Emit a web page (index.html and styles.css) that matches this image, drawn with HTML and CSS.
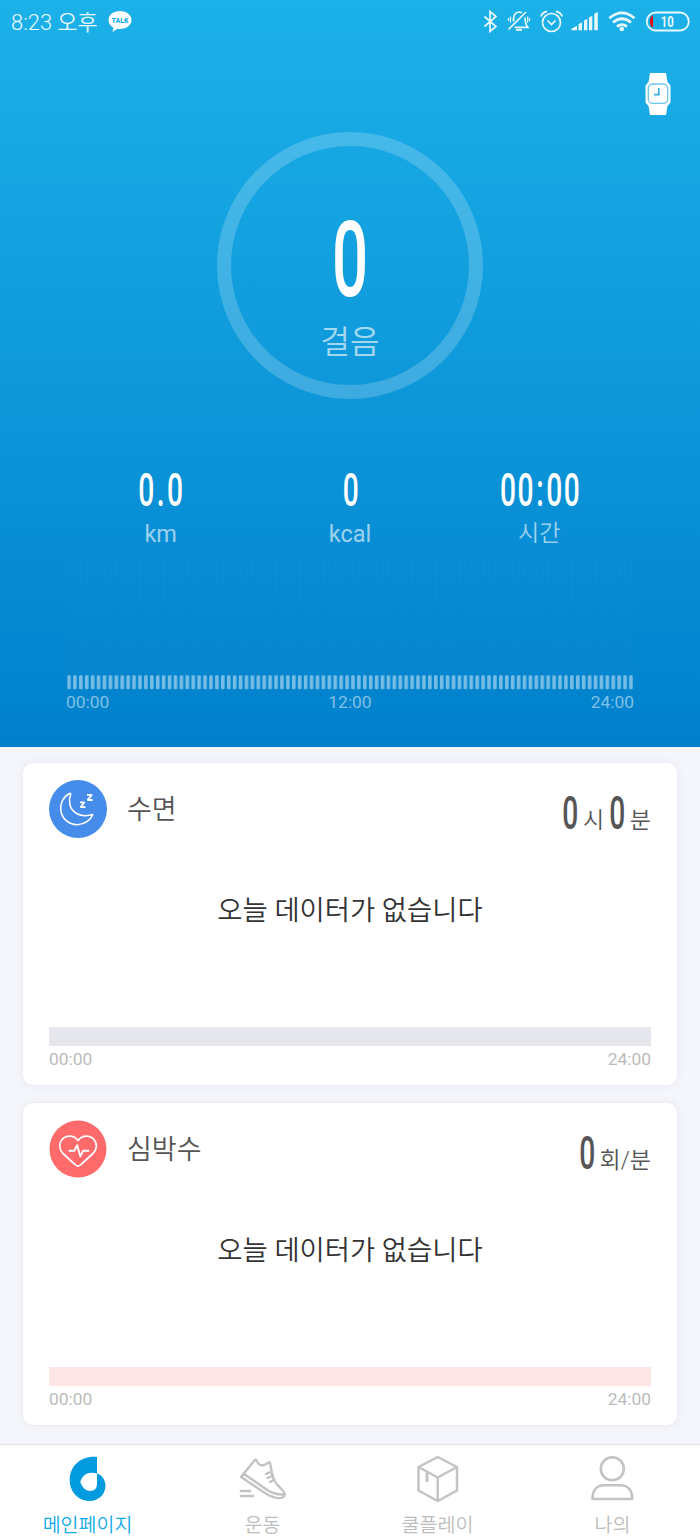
FILE: index.html
```html
<!DOCTYPE html>
<html lang="ko">
<head>
<meta charset="utf-8">
<title>메인페이지</title>
<link rel="stylesheet" href="styles.css">
</head>
<body>
<main class="app">
  <section class="hero">
    <header class="status">
      <div class="status-left">
        <span>8:23 오후</span>
        <svg width="24" height="24" viewBox="0 0 24 24"><path d="M12 1C5.400 1 .5 4.900 .5 10c0 3.400 2 6.200 5 7.700L4.500 22l5-3.300c.8.100 1.600.2 2.500.2 6.600 0 11.500-3.900 11.500-8.900S18.600 1 12 1z" fill="#fff"/><text class="talk" x="12" y="12.500" text-anchor="middle" textLength="17" lengthAdjust="spacingAndGlyphs">TALK</text></svg>
      </div>
      <svg class="status-right" width="210" height="26" viewBox="480 9 210 26" fill="none" stroke="#e9f8ff" stroke-width="1.700">
        <path d="M484.500 16.500 L496 26.500 L490 31.500 V11.500 L496 16.500 L484.500 26.500"/>
        <path d="M508.500 29.500 L526 12"/>
        <path d="M513.500 21.500 V18.500 C514 14 516.500 12 519.500 12 L522 12.700 M525 17.500 C525.200 22 525.500 24.500 527.800 27.300 H514.500"/>
        <path d="M516 29.800 H522" stroke-width="2"/>
        <path d="M510.500 16.500 V22.500 M508.500 18 V21 M527.700 16.500 V22.500 M529.500 18 V21" stroke-width="1.200"/>
        <circle cx="551.500" cy="22.500" r="9"/>
        <path d="M547.500 20.500 L551.500 24.500 L555.500 20.500 M540.800 16.500 Q542 12.500 547 11.300 M562.200 16.500 Q561 12.500 556 11.300"/>
        <g fill="#e9f8ff" stroke="none"><path d="M571.500 30.200 v-1.500 l5.500-3 v4.500z"/><path d="M578.500 30.200 v-6 l3.500-2 v8z"/><path d="M584 30.200 V20.500 l3.300-1.700 V30.200z"/><path d="M589 30.200 V17.500 l3.300-1.700 V30.200z"/><path d="M594.300 30.200 V13.800 l3.500-1.800 V30.200z"/></g>
        <g stroke-width="2.700"><path d="M609.300 18.200 Q622 7.500 634.500 18.200"/><path d="M613 22.500 Q622 15 631 22.500"/><path d="M617 26.600 Q622 22.500 627 26.600"/></g>
        <circle cx="621.800" cy="29" r="2.300" fill="#e9f8ff" stroke="none"/>
        <rect x="646.800" y="12.500" width="42" height="18" rx="9" stroke-width="1.800"/>
        <path d="M653 15.500 V27.500 C649 27 648.800 16 653 15.500z" fill="#e50914" stroke="none"/>
        <text class="battery" x="667.300" y="26.500" text-anchor="middle" textLength="13" lengthAdjust="spacingAndGlyphs">10</text>
      </svg>
    </header>
    <div class="toolbar">
      <svg width="26" height="42" viewBox="0 0 26 42"><path d="M5 0h16l1.500 9 3 3.500v17L22.500 33 21 42H5l-1.500-9-3-3.500v-17L3.500 9z" fill="#fff"/><rect x="3.300" y="11" width="19.400" height="19.400" rx="4.500" fill="none" stroke="#6cc5eb" stroke-width="1.300"/><path d="M13.800 15v6.700H9" fill="none" stroke="#39aee2" stroke-width="1.700"/></svg>
    </div>
    <div class="ring">
      <div class="steps"><span class="narrow">0</span></div>
      <div class="steps-label">걸음</div>
    </div>
    <div class="stats">
      <div class="stat"><b class="num"><span class="narrow">0<i class="dot">.</i>0</span></b><span>km</span></div>
      <div class="stat"><b class="num"><span class="narrow">0</span></b><span>kcal</span></div>
      <div class="stat"><b class="num"><span class="narrow">00<i class="colon">:</i>00</span></b><span class="ko">시간</span></div>
    </div>
    <svg class="ticks" width="568" height="130" viewBox="0 0 568 130">
      <defs>
        <pattern id="tick" x="1.200" width="5.916" height="15" patternUnits="userSpaceOnUse" y="115"><rect x="0" y="0.300" width="3.600" height="14" rx="1.300" fill="#fff" fill-opacity=".46"/></pattern>
        <pattern id="stripe" x="1.200" width="5.916" height="115" patternUnits="userSpaceOnUse"><rect width="3.600" height="115" fill="#fff" fill-opacity=".006"/></pattern>
      </defs>
      <rect x="1.200" width="566" height="115" fill="url(#stripe)"/>
      <rect x="1.200" y="115" width="566" height="15" fill="url(#tick)"/>
    </svg>
    <div class="scale"><span>00:00</span><span>12:00</span><span>24:00</span></div>
  </section>

  <section class="cards">
    <article class="card">
      <div class="card-head">
        <svg width="58" height="58" viewBox="0 0 58 58"><circle cx="29" cy="29" r="29" fill="#468ceb"/><g fill="none" stroke="#fff"><path d="M20.500 13.500C14 17 10.500 24 12 31.500 13.800 40 21 45 28.500 44.700 36 44.400 42 39.500 43.700 34.800 43.500 33.600 36 38.500 27.500 33.500 20 29 19.200 20.500 21.700 14.300 21.800 13.300 21.200 13 20.500 13.500z" stroke-width="1.500"/><path stroke-linejoin="bevel" d="M31 22.300h4.500l-4 4.900h5M38 14.800h4.900l-4.400 5.200h5.200" stroke-width="1.800"/></g></svg>
        <h2>수면</h2>
        <div class="value"><b class="num"><span class="narrow">0</span></b><span class="unit hour">시</span><b class="num"><span class="narrow">0</span></b><span class="unit">분</span></div>
      </div>
      <p class="empty">오늘 데이터가 없습니다</p>
      <div class="track sleep"></div>
      <div class="range"><span>00:00</span><span>24:00</span></div>
    </article>
    <article class="card">
      <div class="card-head">
        <svg width="58" height="58" viewBox="0 0 58 58"><circle cx="29" cy="29" r="28.500" fill="#ff6b6b"/><g fill="none" stroke="#fff" stroke-linejoin="round" stroke-linecap="round"><path d="M29 20.500C24.500 14.500 17 15 13 19.500 9.500 24 10.300 29.500 14 33.500L26 44.500Q29 47.500 32 44.500L44 33.500C48 29.500 48.700 24 45 19.500 41 15 33.500 14.500 29 20.500z" stroke-width="1.700"/><path d="M20.300 30.800h5l2.900-5.600 3.100 11.100 2.700-5.500h5.500" stroke-width="1.900"/></g></svg>
        <h2>심박수</h2>
        <div class="value"><b class="num"><span class="narrow">0</span></b><span class="unit">회/분</span></div>
      </div>
      <p class="empty">오늘 데이터가 없습니다</p>
      <div class="track heart"></div>
      <div class="range"><span>00:00</span><span>24:00</span></div>
    </article>
  </section>

  <nav class="tabs">
    <a class="tab active"><svg width="48" height="48" viewBox="0 0 48 48"><path fill-rule="evenodd" d="M33 3C17 1.500 5.700 12 5.700 26 5.700 38.500 15 47 25.500 47 35 47 41.500 40 41.500 31.500 41.500 26 38 21 33 19.500zM33 19.800V29C33 34 31 37 26 37 21 37 18 32.500 16.300 28 18 22 22.500 18.800 27.500 18.800 29.500 18.800 31.500 19 33 19.800z" fill="#009bdf"/></svg><span>메인페이지</span></a>
    <a class="tab"><svg width="48" height="48" viewBox="0 0 48 48" fill="none" stroke="#c3c3c3" stroke-width="2.400" stroke-linecap="round" stroke-linejoin="round"><path d="M2 23L15.500 6.500Q17 4.500 18 7.500 21 13.500 27.500 10 31 6.500 31.500 11C33.500 25 35.500 29 41.500 34 46.500 39 47 42 43.500 43.500 38.500 45.500 30.500 42.500 24.500 38L2 23zM4.500 19.500L27.500 35.500Q35.500 41 45 40.500M27 20l5.500-2.500M28.500 24l5.500-2.500M31 28l4.500-2.500"/><path d="M2 37h9M2 42h12" stroke-width="2.700"/></svg><span>운동</span></a>
    <a class="tab"><svg width="48" height="48" viewBox="0 0 48 48" fill="none" stroke="#c3c3c3" stroke-width="2.500" stroke-linejoin="round"><path d="M23.700 3L43 13V36.500L23.700 47 4.500 36.500V13zM4.500 13L23.700 23.500 43 13M23.700 23.500V47"/><path d="M13 18.500v9.500" stroke-width="3"/></svg><span>쿨플레이</span></a>
    <a class="tab"><svg width="48" height="48" viewBox="0 0 48 48" fill="none" stroke="#c3c3c3" stroke-width="2.600" stroke-linejoin="round"><circle cx="23.300" cy="14.800" r="11.500"/><path d="M15 31.200h16.500C38.500 31.200 43.200 36 43.200 45H3.500C3.500 36 8 31.200 15 31.200z"/></svg><span>나의</span></a>
  </nav>
</main>
</body>
</html>
```

FILE: styles.css
```css
* { box-sizing: border-box; }
body { margin: 0; font-family: Roboto, "Noto Sans CJK KR", sans-serif; background: #f5f6fb; }
h2, p { margin: 0; font-weight: 350; }
svg { display: block; flex: none; }
.app { width: 700px; height: 1540px; display: flex; flex-direction: column; overflow: hidden; }

.hero { height: 747px; flex: none; background: linear-gradient(#1cb1e9, #0080cc); color: #fff; display: flex; flex-direction: column; align-items: center; }
.status { width: 100%; height: 44px; padding: 9px 10px 0 11px; display: flex; justify-content: space-between; color: #e9f8ff; }
.status-left { display: flex; gap: 10px; font-size: 21.900px; line-height: 27px; font-weight: 350; }
.status-left svg { margin-top: 1px; }
.talk { font: 900 7.500px Roboto, sans-serif; fill: #1cafe8; }
.battery { font: 700 14.500px Roboto, sans-serif; fill: #e9f8ff; stroke: none; }
.toolbar { width: 100%; height: 88px; padding: 29px 29px 0; display: flex; justify-content: flex-end; }

.ring { width: 266px; height: 267px; border: 14px solid rgba(255,255,255,.2); border-radius: 50%; padding-top: 74px; display: flex; flex-direction: column; align-items: center; }
.narrow { display: inline-block; transform: scaleX(.6); }
.narrow i { font-style: normal; }
.steps { font-size: 106px; line-height: 80px; font-weight: 500; height: 78px; }
.steps-label { font-size: 32px; line-height: 44px; margin-top: 22px; font-weight: 350; opacity: .62; }

.stats { width: 568px; margin-top: 73px; display: grid; grid-template-columns: repeat(3, 189.300px); height: 85px; }
.stat { display: flex; flex-direction: column; align-items: center; font-size: 23.500px; font-weight: 400; }
.stat > span { color: rgba(255,255,255,.62); line-height: 30px; margin-top: 11px; }
.stat > .ko { font-size: 23px; font-weight: 350; }
.num { font-size: 47px; line-height: 36px; height: 36px; font-weight: 500; }
.num .narrow { letter-spacing: 2.400px; margin-right: -2.400px; }
.dot { margin: 0 1.500px; }
.colon { margin: 0 2px; }

.ticks { margin-top: 3px; }
.scale { width: 568px; display: grid; grid-template-columns: 1fr 1fr 1fr; font-size: 17.400px; line-height: 24px; color: rgba(255,255,255,.5); }
.scale span:nth-child(2) { text-align: center; }
.scale span:nth-child(3) { text-align: right; }

.cards { flex: 1; padding: 16px 23px 0; display: flex; flex-direction: column; gap: 18px; }
.card { height: 322px; padding: 17px 26px 0; border-radius: 10px; background: #fff; box-shadow: 0 0 8px rgba(50,60,90,.08); display: flex; flex-direction: column; }
.card-head { display: flex; height: 58px; align-items: center; color: #555; }
.card-head h2 { font-size: 27px; line-height: 40px; margin-left: 20px; padding-top: 1px; }
.value { margin-left: auto; display: flex; align-items: center; padding-top: 7px; }
.value .narrow { margin: 0 -5px; letter-spacing: 0; }
.unit { font-size: 23px; line-height: 30px; margin-top: 17px; margin-left: 4px; font-weight: 350; }
.hour { margin-right: 5px; }
.empty { margin-top: 53px; text-align: center; font-size: 27.400px; line-height: 40px; color: #333; }
.track { margin-top: 96px; height: 19px; margin-bottom: 1px; flex: none; }
.sleep { background: #e6e7ed; }
.heart { background: #ffe6e6; }
.range { display: flex; justify-content: space-between; font-size: 17.400px; line-height: 24px; color: #bbb; }

.tabs { height: 96px; flex: none; background: #fff; border-top: 1px solid #e2e3e6; display: grid; grid-template-columns: repeat(4, 1fr); padding-top: 9px; }
.tab { display: flex; flex-direction: column; align-items: center; font-size: 19.500px; line-height: 28px; font-weight: 350; color: #bdbdbd; }
.tab span { margin-top: 10px; }
.active { color: #16ace5; }
```
